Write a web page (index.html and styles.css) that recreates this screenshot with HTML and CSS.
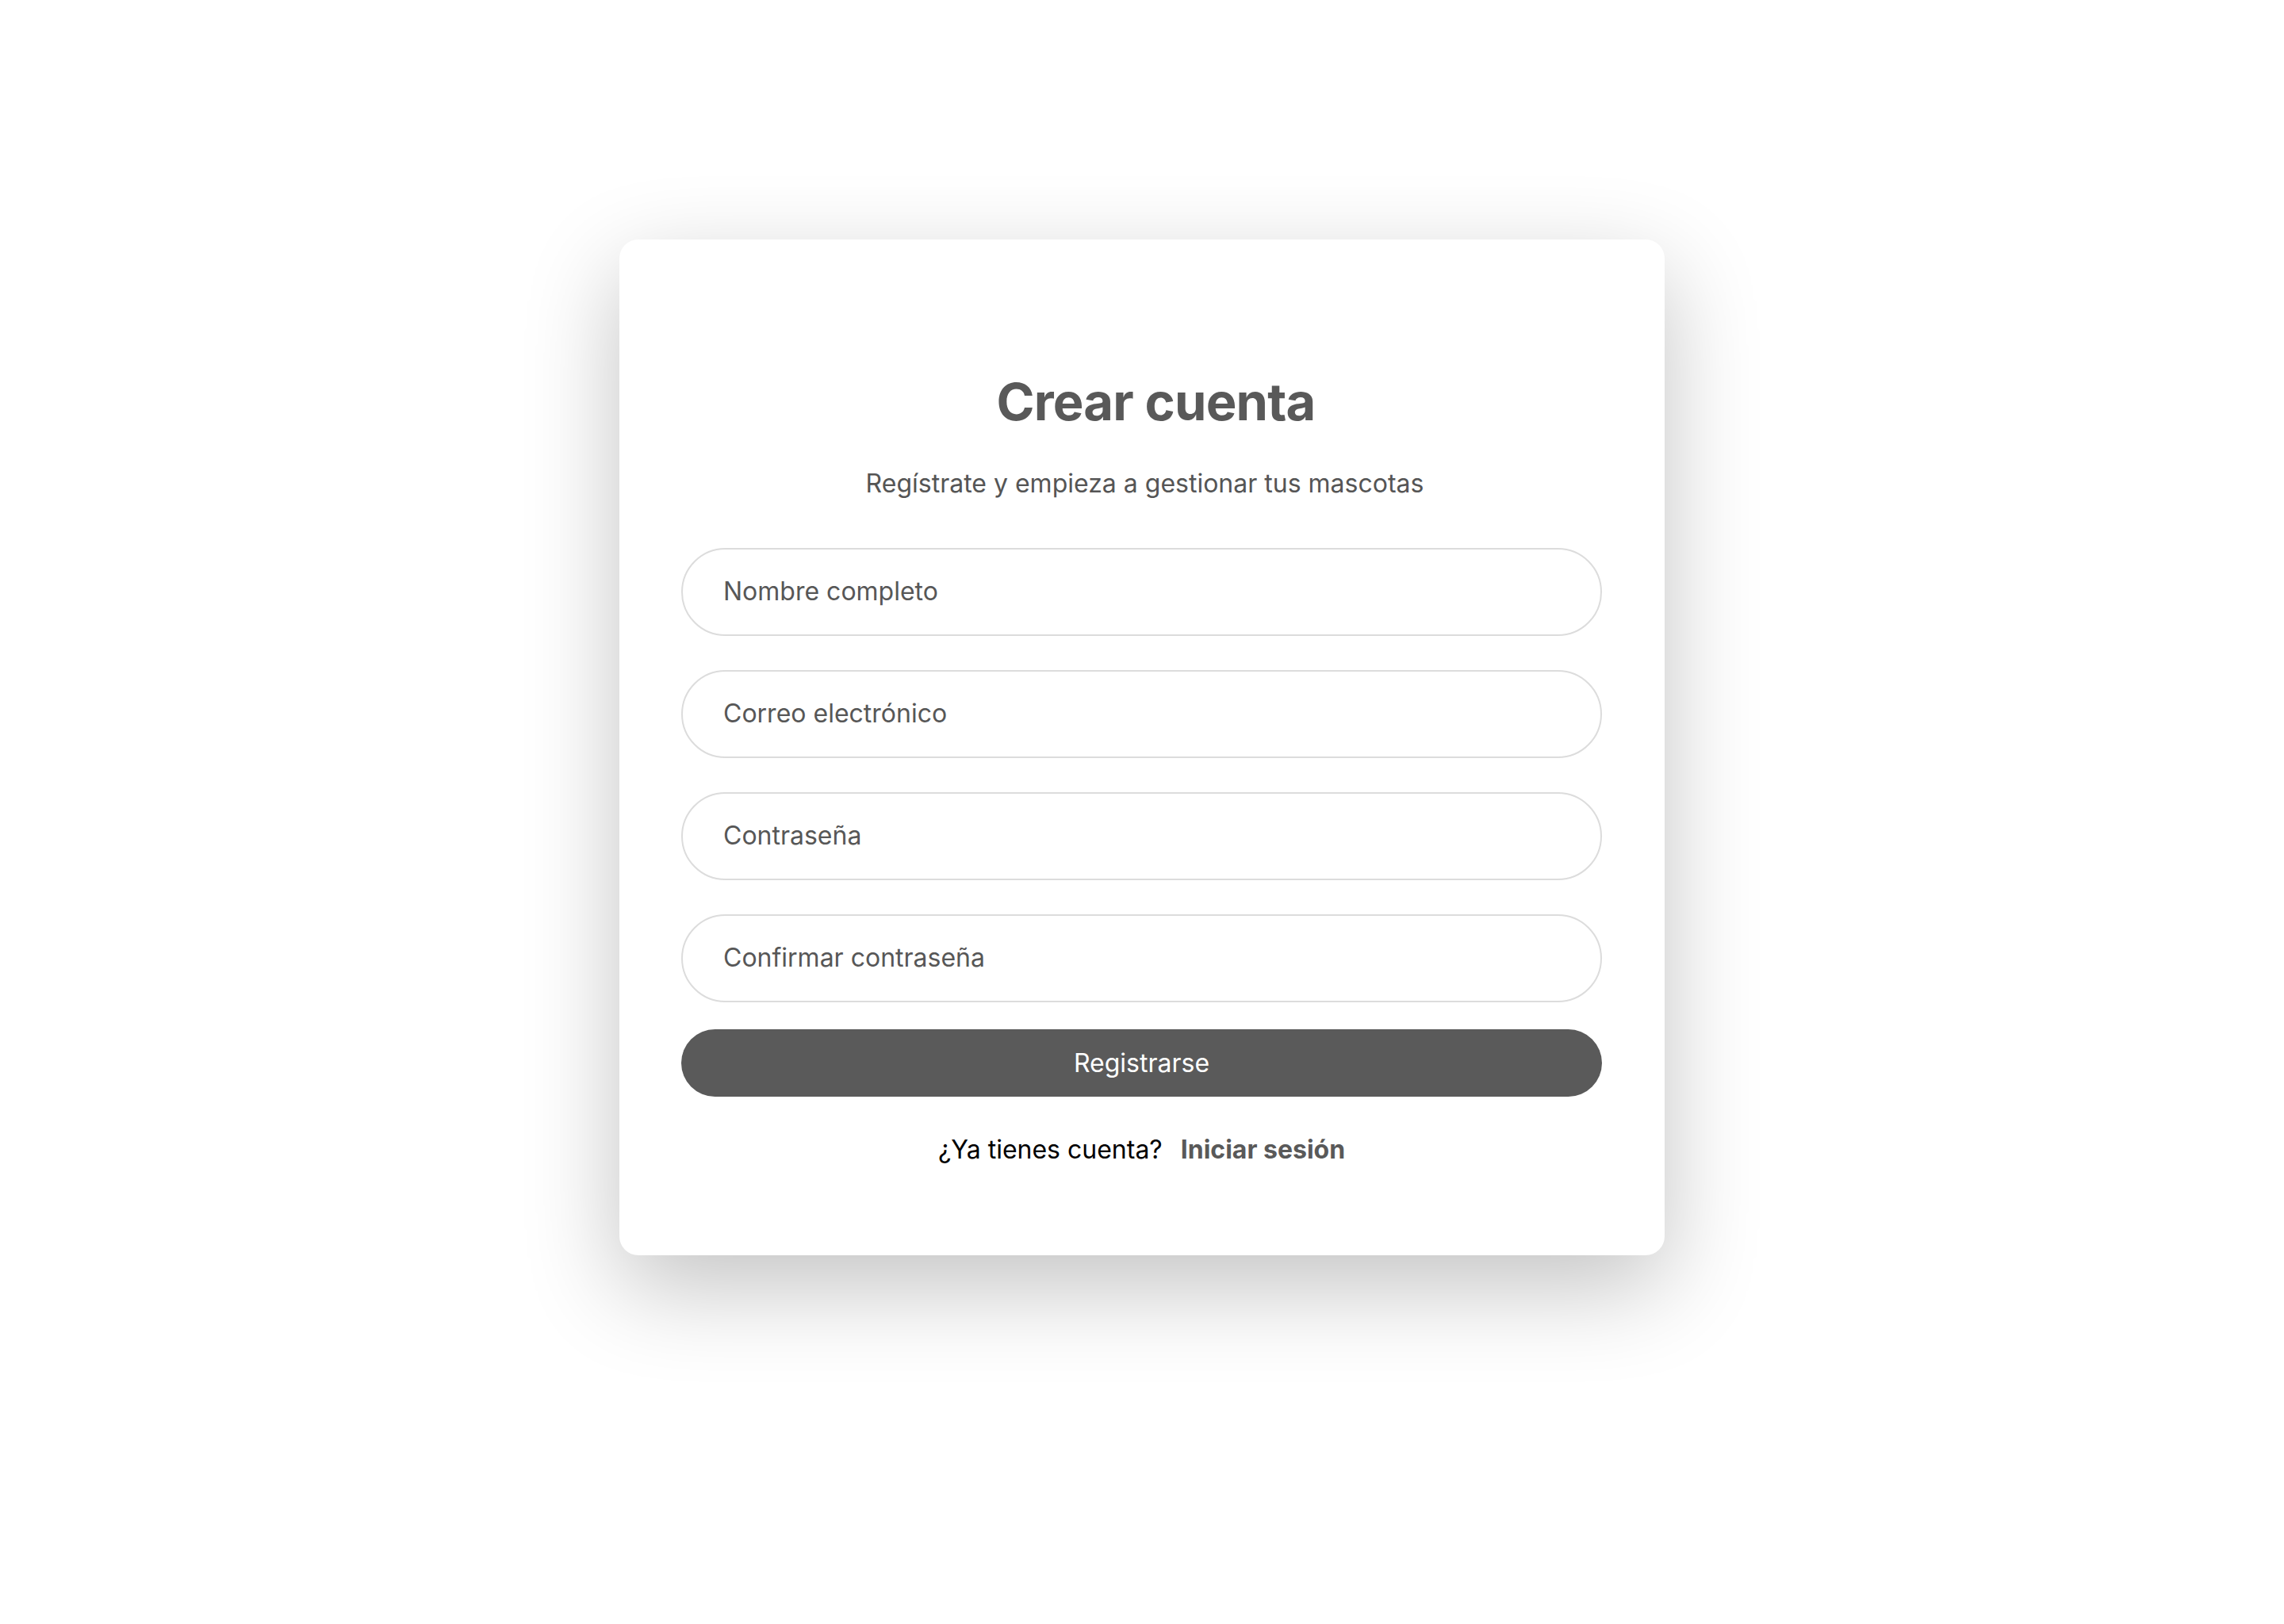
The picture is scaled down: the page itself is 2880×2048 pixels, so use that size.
FILE: index.html
```html
<!DOCTYPE html>
<html lang="es">
<head>
<meta charset="utf-8">
<title>Crear cuenta</title>
<link rel="stylesheet" href="styles.css">
</head>
<body>
<main class="page">
  <section class="card">
    <h1 class="title">Crear cuenta</h1>
    <p class="subtitle">Regístrate y empieza a gestionar tus mascotas</p>
    <form class="form">
      <input class="field" type="text" placeholder="Nombre completo">
      <input class="field" type="email" placeholder="Correo electrónico">
      <input class="field" type="password" placeholder="Contraseña">
      <input class="field" type="password" placeholder="Confirmar contraseña">
      <button class="submit" type="button">Registrarse</button>
    </form>
    <p class="footer">¿Ya tienes cuenta? <a class="login" href="#">Iniciar sesión</a></p>
  </section>
</main>
</body>
</html>
```

FILE: styles.css
```css
* { box-sizing: border-box; }

html, body {
  margin: 0;
  padding: 0;
  background: #ffffff;
  font-family: "Inter", "Noto Sans", "Liberation Sans", sans-serif;
}

.page {
  min-height: 2048px;
  display: flex;
  justify-content: center;
  align-items: flex-start;
  padding-top: 302px;
}

.card {
  width: 1318px;
  background: #ffffff;
  border-radius: 24px;
  box-shadow: 0 40px 120px rgba(0, 0, 0, 0.24);
  padding: 165px 79px 114px 78px;
  display: flex;
  flex-direction: column;
}

.title {
  margin: 0;
  padding-left: 36px;
  text-align: center;
  font-size: 65px;
  letter-spacing: -0.8px;
  line-height: 80px;
  font-weight: 700;
  color: #595959;
}

.subtitle {
  margin: 43px 0 0;
  padding-left: 8px;
  text-align: center;
  font-size: 32px;
  line-height: 39px;
  color: #555555;
}

.form {
  margin-top: 62px;
  display: flex;
  flex-direction: column;
  gap: 43px;
}

.field {
  display: block;
  width: 100%;
  height: 111px;
  border: 2px solid #dcdcdc;
  border-radius: 56px;
  padding: 0 44px 2px 51px;
  font-family: inherit;
  font-size: 32px;
  color: #333333;
  background: #ffffff;
  outline: none;
}

.field::placeholder {
  color: #575757;
  opacity: 1;
}

.submit {
  margin-top: -9px;
  height: 85px;
  width: 100%;
  border: none;
  border-radius: 43px;
  background: #5a5a5a;
  color: #ffffff;
  font-family: inherit;
  font-size: 32px;
  cursor: pointer;
}

.footer {
  margin: 47px 0 0;
  text-align: center;
  font-size: 32px;
  line-height: 39px;
  color: #000000;
}

.login {
  margin-left: 14px;
  font-weight: 700;
  color: #595959;
  text-decoration: none;
}
```
